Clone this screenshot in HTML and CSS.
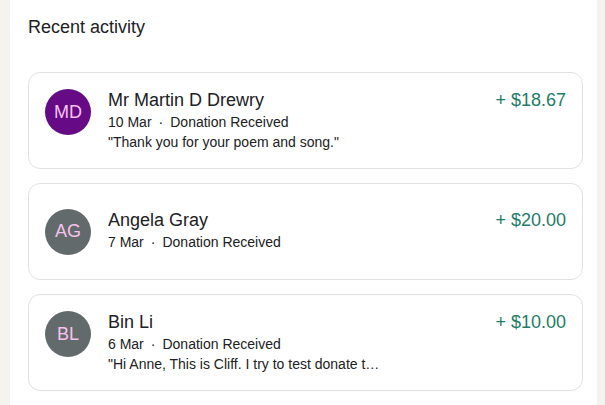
FILE: index.html
```html
<!DOCTYPE html>
<html>
<head>
<meta charset="utf-8">
<link rel="stylesheet" href="styles.css">
</head>
<body>
<main class="panel">
  <h2 class="title">Recent activity</h2>
  <ul class="list">
    <li class="card">
      <div class="row">
        <div class="avatar avatar-purple">MD</div>
        <div class="info">
          <div class="name">Mr Martin D Drewry</div>
          <div class="meta"><span>10 Mar</span><span class="dot">·</span><span>Donation Received</span></div>
          <div class="note">"Thank you for your poem and song."</div>
        </div>
        <div class="amount">+ $18.67</div>
      </div>
    </li>
    <li class="card">
      <div class="row">
        <div class="avatar avatar-gray">AG</div>
        <div class="info">
          <div class="name">Angela Gray</div>
          <div class="meta"><span>7 Mar</span><span class="dot">·</span><span>Donation Received</span></div>
        </div>
        <div class="amount">+ $20.00</div>
      </div>
    </li>
    <li class="card">
      <div class="row">
        <div class="avatar avatar-gray">BL</div>
        <div class="info">
          <div class="name">Bin Li</div>
          <div class="meta"><span>6 Mar</span><span class="dot">·</span><span>Donation Received</span></div>
          <div class="note">"Hi Anne, This is Cliff. I try to test donate t…</div>
        </div>
        <div class="amount">+ $10.00</div>
      </div>
    </li>
  </ul>
</main>
</body>
</html>
```
FILE: styles.css
```css
html, body {
  margin: 0;
  padding: 0;
  height: 100%;
}
body {
  background: #f4f3ef;
  font-family: "Liberation Sans", Arial, sans-serif;
  color: #202124;
}
.panel {
  box-sizing: border-box;
  margin-left: 10px;
  width: 587px;
  min-height: 100%;
  background: #ffffff;
  padding: 17px 14px 0 18px;
}
.title {
  margin: 0;
  font-size: 18px;
  font-weight: normal;
  line-height: normal;
  color: #202124;
}
.list {
  list-style: none;
  margin: 34px 0 0 0;
  padding: 0;
  display: flex;
  flex-direction: column;
  gap: 14px;
}
.card {
  box-sizing: border-box;
  min-height: 97px;
  border: 1px solid #e2e2e2;
  border-radius: 12px;
  padding: 0 16px;
  display: flex;
  align-items: center;
}
.row {
  flex: 1;
  display: flex;
  align-items: flex-start;
}
.avatar {
  flex: none;
  width: 46px;
  height: 46px;
  border-radius: 50%;
  display: flex;
  align-items: center;
  justify-content: center;
  font-size: 18px;
  color: #f6c3ec;
}
.avatar-purple {
  background: #660a86;
}
.avatar-gray {
  background: #636a6b;
}
.info {
  margin-left: 17px;
  flex: 1;
  min-width: 0;
}
.name {
  font-size: 18px;
  line-height: 23px;
}
.meta, .note {
  font-size: 14px;
  line-height: 20px;
}
.dot {
  margin: 0 7px;
}
.note {
  white-space: nowrap;
}
.amount {
  flex: none;
  font-size: 18px;
  line-height: 23px;
  color: #1d7d67;
}
```
